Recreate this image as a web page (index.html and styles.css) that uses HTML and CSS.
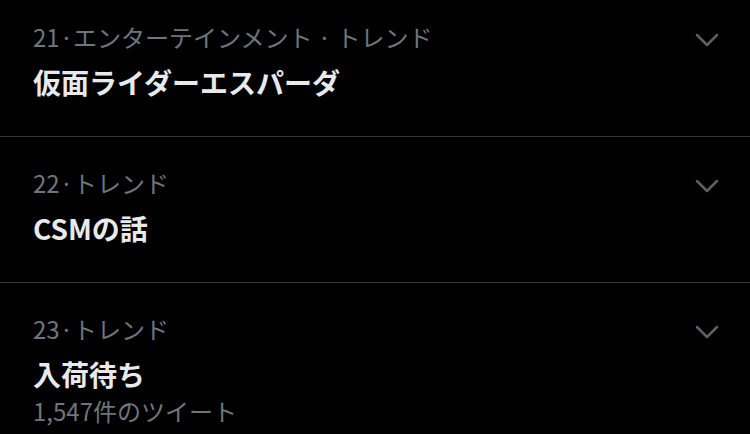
FILE: index.html
```html
<!DOCTYPE html>
<html lang="ja">
<head>
  <meta charset="UTF-8">
  <title>トレンド</title>
  <link rel="stylesheet" href="styles.css">
</head>
<body>
  <ul class="trend-list">
    <li class="trend">
      <div class="trend-body">
        <div class="trend-meta">21·エンターテインメント · トレンド</div>
        <div class="trend-title">仮面ライダーエスパーダ</div>
      </div>
      <svg class="chevron" width="24" height="14" viewBox="0 0 24 14"><polyline points="2,2 12,12 22,2" /></svg>
    </li>
    <li class="trend">
      <div class="trend-body">
        <div class="trend-meta">22·トレンド</div>
        <div class="trend-title">CSMの話</div>
      </div>
      <svg class="chevron" width="24" height="14" viewBox="0 0 24 14"><polyline points="2,2 12,12 22,2" /></svg>
    </li>
    <li class="trend">
      <div class="trend-body">
        <div class="trend-meta">23·トレンド</div>
        <div class="trend-title">入荷待ち</div>
        <div class="trend-count">1,547件のツイート</div>
      </div>
      <svg class="chevron" width="24" height="14" viewBox="0 0 24 14"><polyline points="2,2 12,12 22,2" /></svg>
    </li>
  </ul>
</body>
</html>
```

FILE: styles.css
```css
html, body {
  margin: 0;
  padding: 0;
}

body {
  background-color: #000;
  font-family: "Noto Sans CJK JP", "Noto Sans", sans-serif;
  overflow: hidden;
}

.trend-list {
  list-style-type: none;
  margin: -9px 0 0 0;
  padding: 0;
}

.trend {
  display: flex;
  justify-content: space-between;
  align-items: flex-start;
  padding: 30px 31px 36px 33px;
  border-bottom: 1px solid #333639;
}

.trend-meta {
  font-size: 24px;
  line-height: 32px;
  color: #6e767d;
}

.trend-title {
  margin-top: 11px;
  font-size: 28px;
  line-height: 36px;
  font-weight: bold;
  color: #e7e9ea;
}

.trend-count {
  margin-top: 3px;
  font-size: 24px;
  line-height: 32px;
  color: #6e767d;
}

.chevron {
  margin-top: 12px;
  fill: none;
  stroke: #5b6066;
  stroke-width: 2.5;
  stroke-linecap: round;
  stroke-linejoin: round;
}
```
